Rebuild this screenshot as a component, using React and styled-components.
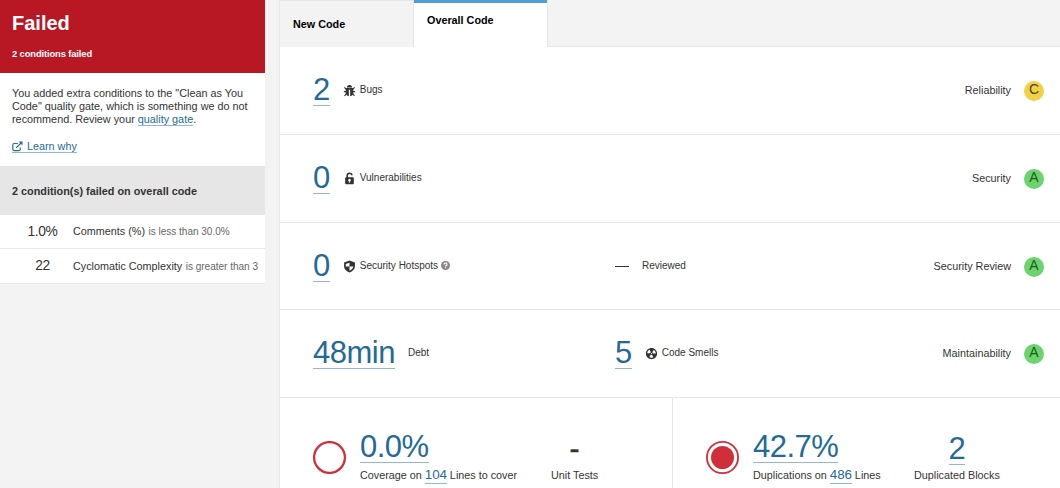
import React from 'react';
import styled, { createGlobalStyle } from 'styled-components';

const GlobalStyle = createGlobalStyle`
  * { box-sizing: border-box; }
  body {
    margin: 0;
    height: 488px;
    overflow: hidden;
    background: #f3f3f3;
    color: #333;
    font-family: "Liberation Sans", Arial, sans-serif;
    font-size: 10.8px;
  }
`;

const Page = styled.div`
  display: flex;
  height: 488px;
  overflow: hidden;
`;

const Sidebar = styled.aside`
  width: 265px;
  flex: none;
`;

const Banner = styled.header`
  height: 73px;
  padding: 11px 12px 0;
  background: #b81724;
  color: #fff;
`;

const Title = styled.h1`
  margin: 0;
  font-size: 20px;
  line-height: 24px;
`;

const Subtitle = styled.div`
  margin-top: 12px;
  font-size: 9.4px;
  font-weight: bold;
  letter-spacing: -0.12px;
  line-height: 13px;
`;

const Notice = styled.section`
  height: 93px;
  padding: 14px 12px 0;
  background: #fff;
  line-height: 13px;
`;

const NoticeText = styled.p`
  margin: 0 0 14px;
  font-size: 10.83px;
  white-space: nowrap;
`;

const Link = styled.a`
  display: inline-block;
  color: #236a97;
  line-height: 12px;
  border-bottom: 1px solid #90b8cf;
`;

const LearnLink = styled(Link)`
  display: inline-flex;
  align-items: center;
  gap: 4px;
`;

const GroupTitle = styled.h2`
  margin: 0;
  height: 49px;
  padding: 0 12px;
  background: #e6e6e6;
  font-size: 10.85px;
  line-height: 50px;
`;

const Condition = styled.div`
  display: flex;
  align-items: center;
  height: ${(p) => p.$height}px;
  padding-bottom: 1px;
  background: #fff;
  border-bottom: 1px solid #e6e6e6;
  white-space: nowrap;
`;

const ConditionValue = styled.span`
  width: 85px;
  margin-right: -12px;
  text-align: center;
  font-size: 13.8px;
  letter-spacing: -0.4px;
`;

const Muted = styled.small`
  margin-left: 0.5px;
  color: #666;
  font-size: 10px;
`;

const Main = styled.main`
  flex: 1;
  margin-left: 14px;
  border-left: 1px solid #e6e6e6;
`;

const Tabs = styled.nav`
  display: flex;
  height: 47px;
`;

const Tab = styled.div`
  width: ${(p) => (p.$active ? 135 : 133)}px;
  padding: ${(p) => (p.$active ? '14px 13px' : '17px 13px')};
  background: ${(p) => (p.$active ? '#fff' : '#f3f3f3')};
  border: solid #e6e6e6;
  border-width: ${(p) => (p.$active ? '0 1px' : '1px 0 0')};
  box-shadow: ${(p) => (p.$active ? 'inset 0 3px #4b9fd5' : 'none')};
  color: #000;
  font-size: 10.8px;
  font-weight: bold;
  line-height: 13px;
`;

const TabRest = styled.div`
  flex: 1;
  border-bottom: 1px solid #e6e6e6;
`;

const Row = styled.section`
  display: flex;
  align-items: flex-start;
  height: ${(p) => p.$height}px;
  padding: 27px 16px 0 33px;
  background: #fff;
  border-bottom: 1px solid #e6e6e6;
`;

const Measure = styled.div`
  display: flex;
  align-items: center;
  width: 302px;
  height: 32px;
`;

const Figure = styled.a`
  display: inline-block;
  color: #236a97;
  font-size: 31px;
  letter-spacing: -0.5px;
  line-height: 31px;
  border-bottom: 1px solid #90b8cf;
`;

const Label = styled.span`
  display: flex;
  align-items: center;
  gap: 3px;
  margin-left: ${(p) => p.$gap || 12}px;
  margin-bottom: 1px;
  font-size: 10px;
  line-height: 13px;

  > svg:first-child {
    margin-top: 2px;
  }
`;

const Dash = styled.span`
  width: 14px;
  height: 1px;
  background: #333;
`;

const Rating = styled.div`
  display: flex;
  align-items: center;
  gap: 13px;
  height: 32px;
  margin-left: auto;
`;

const Grade = styled.span`
  width: 20px;
  height: 20px;
  margin-top: 2px;
  border-radius: 50%;
  background: ${(p) => (p.$level === 'C' ? '#f0d148' : '#6cd46c')};
  color: ${(p) => (p.$level === 'C' ? '#4d431a' : '#215821')};
  font-size: 14px;
  line-height: 17px;
  text-align: center;
`;

const Bottom = styled.div`
  display: flex;
  height: 90px;
  background: #fff;
`;

const Panel = styled.section`
  display: flex;
  width: ${(p) => p.$width}px;
  padding: 32px 0 0 33px;
  white-space: nowrap;

  & + & {
    border-left: 1px solid #e6e6e6;
  }
`;

const Ring = styled.svg`
  flex: none;
  width: 34px;
  height: 34px;
  margin: 11px 13px 0 0;
`;

const Ratio = styled.div`
  width: ${(p) => p.$width}px;
  padding-top: 1px;
`;

const Detail = styled.div`
  margin-top: 4px;
  line-height: 17px;
`;

const Lines = styled(Link)`
  font-size: 13.4px;
  letter-spacing: -0.1px;
  line-height: 16px;
`;

const Side = styled.div`
  display: flex;
  flex-direction: column;
  align-items: center;
  padding-top: 3px;
`;

const NoValue = styled.span`
  font-size: 30px;
  line-height: 32px;
  -webkit-text-stroke: 0.5px #333;
`;

const SideLabel = styled.span`
  margin-top: 4px;
  line-height: 13px;
`;

const Glyph = ({ size = 15, children }) => (
  <svg width={size} height={size} viewBox="0 0 16 16" fill="#333" fillRule="evenodd">
    {children}
  </svg>
);

const BugIcon = () => (
  <Glyph>
    <path d="M5.200 4.800a2.800 2.800 0 0 1 5.600 0zM4 5.400h8v6.200q-1 2.200-3.300 2.400V7.200H7.300V14Q5 13.800 4 11.600z" />
    <path d="M4.600 6.800 2.600 4.600M11.400 6.800l2-2.200M4.500 9.200H2M11.500 9.200H14M4.800 11.400l-2.100 2.400M11.200 11.400l2.100 2.400" stroke="#333" strokeWidth="1.200" />
  </Glyph>
);

const VulnerabilityIcon = () => (
  <Glyph>
    <path d="M11.200 6.600H6.400V4.800A1.700 1.700 0 0 1 8 3.100a1.700 1.700 0 0 1 1.700 1.500l1.700-.1A3.400 3.400 0 0 0 8 1.500a3.400 3.400 0 0 0-3.300 3.300v1.800h-.4q-.9 0-.9.9v5.600q0 .9.9.9h7.400q.9 0 .9-.9V7.500q0-.9-.9-.9zM8.700 10.900v1.400H7.300v-1.400a1.400 1.400 0 1 1 1.400 0z" />
  </Glyph>
);

const HotspotIcon = () => (
  <Glyph>
    <path d="M8 1.700 2.200 3.600v4.200c0 3.400 2.500 5.400 5.800 6.600 3.300-1.200 5.800-3.200 5.800-6.600V3.600zM8 4v4h4q-.2 2.800-4 4.400V8H4V5.200z" />
  </Glyph>
);

const SmellIcon = () => (
  <Glyph>
    <path d="M8 2C4.700 2 2 4.700 2 8s2.700 6 6 6 6-2.700 6-6-2.700-6-6-6zm-.5 5.500h.9v.9h-.9v-.9zm-3.800.2c-.1 0-.2-.1-.2-.2 0-.4.1-1.200.6-2S5.300 4.200 5.600 4c.2 0 .3 0 .3.1l1.300 2.300c0 .1 0 .2-.1.2-.1.2-.2.3-.3.5-.1.2-.2.4-.2.5 0 .1-.1.2-.2.2l-2.700-.1zM9.900 12c-.3.2-1.100.5-2 .5-.9 0-1.700-.3-2-.5-.1 0-.1-.2-.1-.3l1.300-2.300c0-.1.1-.1.2-.1.2.1.3.1.5.1s.4 0 .5-.1c.1 0 .2 0 .2.1l1.300 2.300c.2.2.2.3.1.3zm2.500-4.100L9.700 8c-.1 0-.2-.1-.2-.2 0-.2-.1-.4-.2-.5 0-.1-.2-.3-.3-.4-.1 0-.1-.1-.1-.2l1.300-2.300c.1-.1.2-.1.3-.1.3.2 1 .7 1.500 1.500s.6 1.600.6 2c0 0-.1.1-.2.1z" />
  </Glyph>
);

const HelpIcon = () => (
  <svg width="9" height="9" viewBox="0 0 12 12">
    <circle cx="6" cy="6" r="6" fill="#888" />
    <path d="M4 4.700a2 1.800 0 1 1 3 1.400q-1 .5-1 1.200M6 8.300v1.500" fill="none" stroke="#fff" strokeWidth="1.500" />
  </svg>
);

const ExternalIcon = () => (
  <svg width="11" height="11" viewBox="0 0 11 11" fill="none" stroke="#236a97" strokeWidth="1.200">
    <path d="M5.800 2.500H2.300Q.8 2.500.8 4v4.200q0 1.500 1.500 1.500h4.500q1.500 0 1.500-1.500V6.600M4.200 6.800 9.500 1.500" />
    <path d="M6.600.5h3.900v3.900z" fill="#236a97" stroke="none" />
  </svg>
);

export default function App() {
  return (
    <>
      <GlobalStyle />
      <Page>
        <Sidebar>
          <Banner>
            <Title>Failed</Title>
            <Subtitle>2 conditions failed</Subtitle>
          </Banner>
          <Notice>
            <NoticeText>
              You added extra conditions to the "Clean as You<br />
              Code" quality gate, which is something we do not<br />
              recommend. Review your <Link>quality gate</Link>.
            </NoticeText>
            <LearnLink><ExternalIcon />Learn why</LearnLink>
          </Notice>
          <GroupTitle>2 condition(s) failed on overall code</GroupTitle>
          <Condition $height={34}>
            <ConditionValue>1.0%</ConditionValue>
            <span>Comments (%) <Muted>is less than 30.0%</Muted></span>
          </Condition>
          <Condition $height={35}>
            <ConditionValue>22</ConditionValue>
            <span>Cyclomatic Complexity <Muted>is greater than 3</Muted></span>
          </Condition>
        </Sidebar>
        <Main>
          <Tabs>
            <Tab>New Code</Tab>
            <Tab $active>Overall Code</Tab>
            <TabRest />
          </Tabs>
          <Row $height={88}>
            <Measure>
              <Figure>2</Figure>
              <Label><BugIcon />Bugs</Label>
            </Measure>
            <Rating>Reliability<Grade $level="C">C</Grade></Rating>
          </Row>
          <Row $height={88}>
            <Measure>
              <Figure>0</Figure>
              <Label><VulnerabilityIcon />Vulnerabilities</Label>
            </Measure>
            <Rating>Security<Grade $level="A">A</Grade></Rating>
          </Row>
          <Row $height={87}>
            <Measure>
              <Figure>0</Figure>
              <Label><HotspotIcon />Security Hotspots<HelpIcon /></Label>
            </Measure>
            <Measure>
              <Dash />
              <Label $gap={13}>Reviewed</Label>
            </Measure>
            <Rating>Security Review<Grade $level="A">A</Grade></Rating>
          </Row>
          <Row $height={88}>
            <Measure>
              <Figure>48min</Figure>
              <Label $gap={13}>Debt</Label>
            </Measure>
            <Measure>
              <Figure>5</Figure>
              <Label><SmellIcon />Code Smells</Label>
            </Measure>
            <Rating>Maintainability<Grade $level="A">A</Grade></Rating>
          </Row>
          <Bottom>
            <Panel $width={392}>
              <Ring viewBox="0 0 34 34">
                <circle cx="16.500" cy="16.500" r="15.400" fill="none" stroke="#d02f3a" strokeWidth="2.300" />
              </Ring>
              <Ratio $width={191}>
                <Figure>0.0%</Figure>
                <Detail>Coverage on <Lines>104</Lines> Lines to cover</Detail>
              </Ratio>
              <Side>
                <NoValue>-</NoValue>
                <SideLabel>Unit Tests</SideLabel>
              </Side>
            </Panel>
            <Panel $width={388}>
              <Ring viewBox="0 0 34 34">
                <circle cx="16.500" cy="16.500" r="15.600" fill="none" stroke="#d02f3a" strokeWidth="1.800" />
                <circle cx="16.500" cy="16.500" r="11.500" fill="#d02f3a" />
              </Ring>
              <Ratio $width={161}>
                <Figure>42.7%</Figure>
                <Detail>Duplications on <Lines>486</Lines> Lines</Detail>
              </Ratio>
              <Side>
                <Figure>2</Figure>
                <SideLabel>Duplicated Blocks</SideLabel>
              </Side>
            </Panel>
          </Bottom>
        </Main>
      </Page>
    </>
  );
}
